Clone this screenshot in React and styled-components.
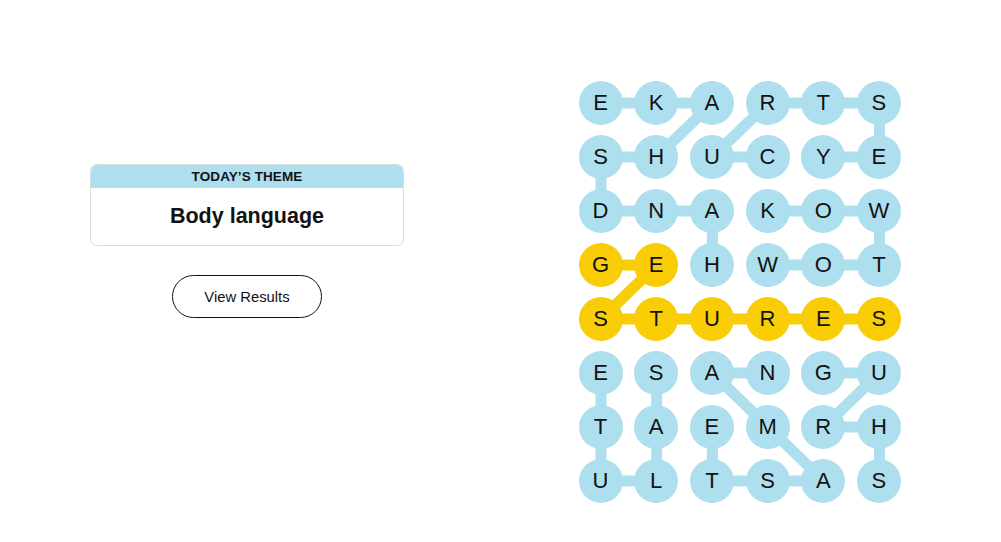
import React from "react";
import styled, { createGlobalStyle } from "styled-components";

const GlobalStyle = createGlobalStyle`
  html, body { margin: 0; padding: 0; background: #fff; }
  body { font-family: "Liberation Sans", Arial, sans-serif; color: #121212; }
`;

const BLUE = "#aedfee";
const YELLOW = "#f8cd05";
const CELL = 44;
const COL_STEP = 55.7;
const ROW_STEP = 54;

const Page = styled.main`
  display: flex;
  width: 1001px;
  height: 542px;
`;

const Side = styled.section`
  width: 494px;
  padding-top: 164px;
  display: flex;
  flex-direction: column;
  align-items: center;
  gap: 29px;
`;

const ThemeCard = styled.div`
  width: 314px;
  box-sizing: border-box;
  border: 1px solid #dcdcdc;
  border-radius: 7px;
  overflow: hidden;
  background: #fff;
`;

const ThemeHeader = styled.div`
  background: ${BLUE};
  height: 23px;
  display: flex;
  align-items: center;
  justify-content: center;
  font-size: 13.5px;
  font-weight: 700;
  letter-spacing: 0.1px;
  text-transform: uppercase;
  color: #121212;
`;

const ThemeTitle = styled.h1`
  margin: 0;
  height: 56px;
  display: flex;
  align-items: center;
  justify-content: center;
  font-size: 21.5px;
  font-weight: 700;
  color: #121212;
  padding-bottom: 1px;
`;

const ResultsButton = styled.button`
  width: 150px;
  height: 43px;
  border: 1px solid #121212;
  border-radius: 22px;
  background: #fff;
  font-family: "Liberation Sans", Arial, sans-serif;
  font-size: 14.8px;
  color: #121212;
  cursor: pointer;
  padding: 0;
`;

const BoardArea = styled.section`
  padding-top: 81px;
  margin-left: 84.5px;
`;

const Board = styled.div`
  position: relative;
  display: grid;
  grid-template-columns: repeat(6, ${CELL}px);
  grid-auto-rows: ${CELL}px;
  column-gap: ${COL_STEP - CELL}px;
  row-gap: ${ROW_STEP - CELL}px;
`;

const Links = styled.svg`
  position: absolute;
  left: 0;
  top: 0;
  width: 100%;
  height: 100%;
  z-index: 0;
  overflow: visible;
`;

const Cell = styled.div`
  position: relative;
  z-index: 1;
  width: ${CELL}px;
  height: ${CELL}px;
  border-radius: 50%;
  background: ${(p) => (p.$spangram ? YELLOW : BLUE)};
  display: flex;
  align-items: center;
  justify-content: center;
  font-size: 22px;
  color: #121212;
  line-height: 1;
`;

const rows = [
  "EKARTS",
  "SHUCYE",
  "DNAKOW",
  "GEHWOT",
  "STURES",
  "ESANGU",
  "TAEMRH",
  "ULTSAS",
];

const yellowCells = new Set(["3,0", "3,1", "4,0", "4,1", "4,2", "4,3", "4,4", "4,5"]);

const blueLinks = [
  [[0, 0], [0, 1]], [[0, 1], [0, 2]], [[0, 2], [1, 1]], [[1, 1], [1, 0]],
  [[1, 0], [2, 0]], [[2, 0], [2, 1]], [[2, 1], [2, 2]], [[2, 2], [3, 2]],
  [[0, 3], [0, 4]], [[0, 4], [0, 5]], [[0, 5], [1, 5]], [[1, 5], [1, 4]],
  [[0, 3], [1, 2]], [[1, 2], [1, 3]],
  [[2, 3], [2, 4]], [[2, 4], [2, 5]], [[2, 5], [3, 5]], [[3, 5], [3, 4]], [[3, 4], [3, 3]],
  [[5, 0], [6, 0]], [[6, 0], [7, 0]], [[7, 0], [7, 1]], [[7, 1], [6, 1]], [[6, 1], [5, 1]],
  [[5, 2], [5, 3]], [[5, 2], [6, 3]], [[6, 3], [7, 4]], [[7, 4], [7, 3]], [[7, 3], [7, 2]], [[7, 2], [6, 2]],
  [[5, 4], [5, 5]], [[5, 5], [6, 4]], [[6, 4], [6, 5]], [[6, 5], [7, 5]],
];

const yellowLinks = [
  [[3, 0], [3, 1]], [[3, 1], [4, 0]], [[4, 0], [4, 1]], [[4, 1], [4, 2]],
  [[4, 2], [4, 3]], [[4, 3], [4, 4]], [[4, 4], [4, 5]],
];

const cx = (c) => c * COL_STEP + CELL / 2;
const cy = (r) => r * ROW_STEP + CELL / 2;

function Link({ a, b, color }) {
  return (
    <line
      x1={cx(a[1])}
      y1={cy(a[0])}
      x2={cx(b[1])}
      y2={cy(b[0])}
      stroke={color}
      strokeWidth="11"
    />
  );
}

export default function App() {
  return (
    <>
      <GlobalStyle />
      <Page>
        <Side>
          <ThemeCard>
            <ThemeHeader>Today’s Theme</ThemeHeader>
            <ThemeTitle>Body language</ThemeTitle>
          </ThemeCard>
          <ResultsButton>View Results</ResultsButton>
        </Side>
        <BoardArea>
          <Board>
            <Links aria-hidden="true">
              {blueLinks.map(([a, b], i) => (
                <Link key={"b" + i} a={a} b={b} color={BLUE} />
              ))}
              {yellowLinks.map(([a, b], i) => (
                <Link key={"y" + i} a={a} b={b} color={YELLOW} />
              ))}
            </Links>
            {rows.map((row, r) =>
              row.split("").map((ch, c) => (
                <Cell key={r + "-" + c} $spangram={yellowCells.has(r + "," + c)}>
                  {ch}
                </Cell>
              ))
            )}
          </Board>
        </BoardArea>
      </Page>
    </>
  );
}
